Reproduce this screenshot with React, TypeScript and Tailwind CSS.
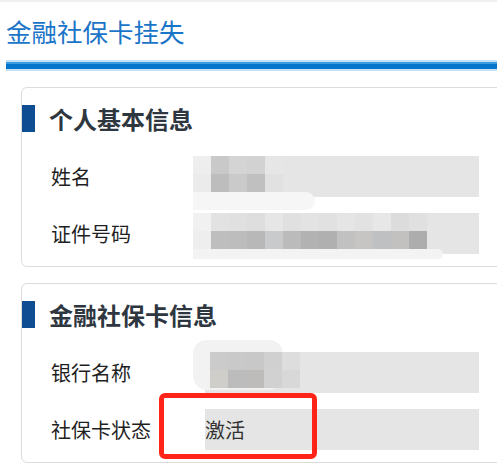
import React from "react"

const FONT = { fontFamily: '"Noto Sans CJK SC", "Microsoft YaHei", sans-serif' }

// mosaic blocks covering private values
const Mosaic = ({ rows, className }: { rows: string[][]; className: string }) => (
  <div className={`absolute flex flex-col ${className}`}>
    {rows.map((row, i) => (
      <div key={i} className="flex">
        {row.map((c, j) => (
          <div key={j} className="h-[18px] w-[18px]" style={{ background: c }} />
        ))}
      </div>
    ))}
  </div>
)

const Field = ({ label, children }: { label: string; children?: React.ReactNode }) => (
  <div className="flex h-[41px] items-center">
    <div className="w-[183px] shrink-0 pl-[29px] text-[20px] text-[#1f1f1f]">{label}</div>
    <div className="relative flex h-full w-[274px] shrink-0 items-center bg-[#e5e5e5] text-[20px] text-[#333]">
      {children}
    </div>
  </div>
)

const Card = ({ title, children }: { title: string; children: React.ReactNode }) => (
  <div className="ml-[21px] w-[500px] rounded-[6px] border border-[#dcdcdc] bg-white pb-[12px] pt-[17px]">
    <div className="flex h-[27px] items-center">
      <div className="h-full w-[13px] bg-[#0f4d92]" />
      <div className="ml-[14px] text-[24px] font-bold text-[#2e3640]">{title}</div>
    </div>
    <div className="mt-[24px] flex flex-col gap-[16px]">{children}</div>
  </div>
)

export default function App() {
  return (
    <div className="relative h-[476px] w-[497px] overflow-hidden bg-white" style={FONT}>
      <div className="h-[2px] bg-[#f0f0f0]" />
      <div className="pl-[6px] pt-[11px] text-[25.5px] leading-[36px] text-[#1a74c8]">金融社保卡挂失</div>
      <div className="ml-[6px] mt-[11px] flex flex-col">
        <div className="h-[2px] bg-[#c4e2f7]" />
        <div className="h-[2px] bg-[#3c9be0]" />
        <div className="h-[5px] bg-[#0574cc]" />
        <div className="h-[2px] bg-[#c4e2f7]" />
      </div>

      <div className="mt-[16px] flex flex-col gap-[16px]">
        <Card title="个人基本信息">
          <Field label="姓名">
            <Mosaic
              className="left-[-12px] top-0"
              rows={[
                ["#eeeeee", "#c9c9c9", "#d4d4d4", "#d2d2d2", "#e6e6e6"],
                ["#ebebeb", "#bdbdbd", "#cacaca", "#c0c0c0", "#e1e1e1"],
              ]}
            />
            <div className="absolute left-[-12px] top-[36px] h-[18px] w-[122px] rounded-r-full bg-[#f6f6f6]" />
          </Field>
          <Field label="证件号码">
            <Mosaic
              className="left-[-12px] top-0"
              rows={[
                ["#f1f1f1", "#e2e2e2", "#e0e0e0", "#dedede", "#e6e6e6", "#e0e0e0", "#e3e3e3", "#e1e1e1", "#e5e5e5", "#e2e2e2", "#e7e7e7", "#dcdcdc", "#e0e0e0"],
                ["#eeeeee", "#bebebe", "#bdbdbd", "#b8b8b8", "#c8cacb", "#bcbbbb", "#b2b2b2", "#b0b0b0", "#c1c1c1", "#c6c5c4", "#bfc0c2", "#c3c1c0", "#adadad"],
              ]}
            />
            <div className="absolute left-[-12px] top-[36px] h-[10px] w-[250px] rounded-r-full bg-[#f3f3f3]" />
          </Field>
        </Card>

        <Card title="金融社保卡信息">
          <Field label="银行名称">
            <div className="absolute left-[-12px] top-[-12px] h-[50px] w-[90px] rounded-[14px] bg-[#f2f2f2]" />
            <Mosaic
              className="left-[5px] top-0"
              rows={[
                ["#cbcbcb", "#c9c9c9", "#c8c8c8", "#d0d0d0", "#dddddd"],
                ["#cfcecb", "#bcbcbc", "#bdbcba", "#d1d1d1", "#d8d8d8"],
              ]}
            />
          </Field>
          <Field label="社保卡状态">
            <span>激活</span>
          </Field>
        </Card>
      </div>

      {/* red annotation box */}
      <div className="absolute left-[159px] top-[393px] h-[66px] w-[158px] rounded-[6px] border-[5px] border-[#ff2417]" />
    </div>
  )
}
